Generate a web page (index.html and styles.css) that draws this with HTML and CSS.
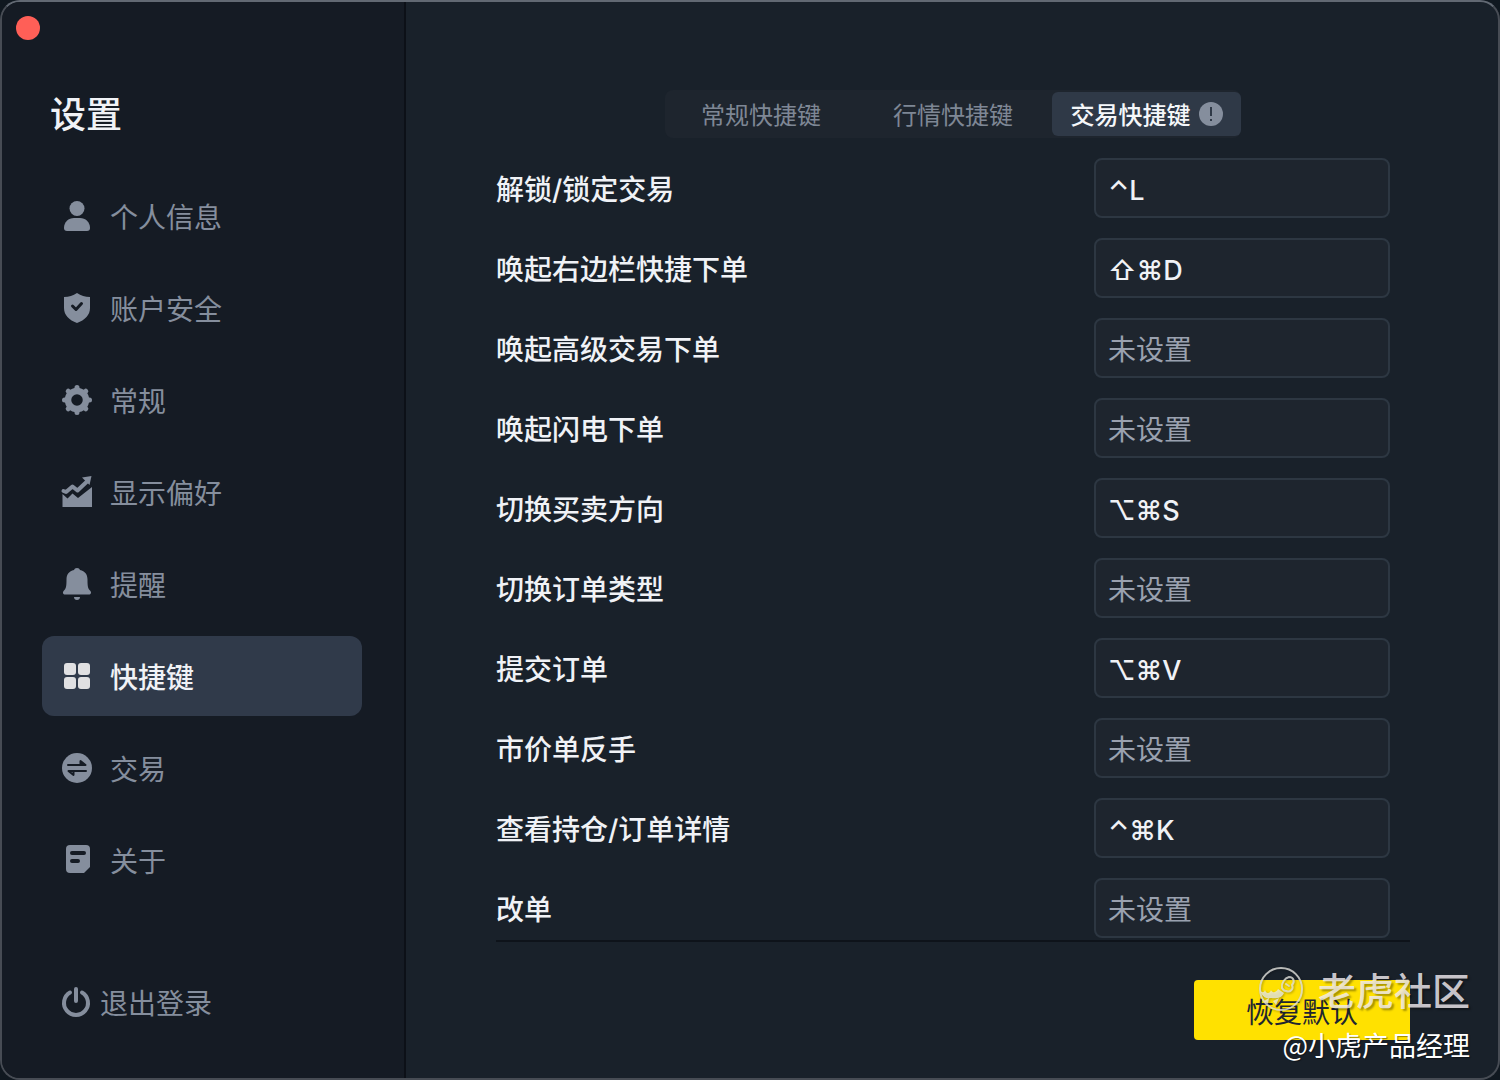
FILE: index.html
```html
<!DOCTYPE html>
<html lang="zh-CN">

<head>
	<meta charset="UTF-8">
	<meta name="viewport" content="width=device-width, initial-scale=1">
	<title>设置</title>
	<link rel="stylesheet" href="styles.css">
</head>

<body>
	<div class="window">
		<aside class="sidebar">
			<button type="button" class="close" aria-label="关闭"></button>
			<h1 class="title">设置</h1>
			<nav class="menu">
				<a href="#profile">
					<svg class="icon" viewBox="0 0 30 30"><circle cx="15" cy="7.5" r="7.5"/><path d="M2 27c0-6 4.500-10 10-10h6c5.500 0 10 4 10 10 0 2-1 3-3 3H5c-2 0-3-1-3-3z"/></svg>
					<span>个人信息</span>
				</a>
				<a href="#security">
					<svg class="icon" viewBox="0 0 30 30"><path d="M15 0c4 2.500 8 4 13 4v11c0 7-5 12-13 15C7 27 2 22 2 15V4c5 0 9-1.500 13-4z"/><path class="cut" d="M10.500 13l3.500 3.500 5.500-6"/></svg>
					<span>账户安全</span>
				</a>
				<a href="#general">
					<svg class="icon" viewBox="0 0 30 30"><circle cx="15" cy="15" r="9" fill="none" stroke="currentColor" stroke-width="6.500"/><path d="M15 2.500v3M15 24.500v3M2.500 15h3M24.500 15h3M6.200 6.200l2 2M21.800 21.800l2 2M6.200 23.800l2-2M21.800 8.200l2-2" fill="none" stroke="currentColor" stroke-width="5" stroke-linecap="round"/></svg>
					<span>常规</span>
				</a>
				<a href="#display">
					<svg class="icon" viewBox="0 0 30 30"><path d="M.500 17l5 4.500 5-5 5.500 4.500L30 10v20H.500z"/><path d="M1.500 14l2.500 1 6.500-5.500 5 4L25 4.500" fill="none" stroke="currentColor" stroke-width="4" stroke-linejoin="round" stroke-linecap="round"/><path d="M20 .500L29.500-1l-2 9z"/></svg>
					<span>显示偏好</span>
				</a>
				<a href="#notice">
					<svg class="icon" viewBox="0 0 30 30"><path d="M15-1c1.700 0 2.500.8 3 2 5 1 7.500 4.500 7.500 9.500 0 7 .5 9 2.500 11 2 2 .8 4-1 4H3c-1.800 0-3-2-1-4 2-2 2.500-4 2.500-11C4.500 5.500 7 2 12 1c.5-1.200 1.300-2 3-2zM12 28h6c0 2-1.200 3-3 3s-3-1-3-3z"/></svg>
					<span>提醒</span>
				</a>
				<a href="#shortcuts" class="active">
					<svg class="icon" viewBox="0 0 30 30"><rect x="2" y="2" width="12" height="12" rx="3"/><rect x="16" y="2" width="12" height="12" rx="3"/><rect x="2" y="16" width="12" height="12" rx="3"/><rect x="16" y="16" width="12" height="12" rx="3"/></svg>
					<span>快捷键</span>
				</a>
				<a href="#trade">
					<svg class="icon" viewBox="0 0 30 30"><circle cx="15" cy="15" r="15"/><path class="cut arrows" d="M6 12h17.500l-5-4v3M24 18H6.500l5 4v-3"/></svg>
					<span>交易</span>
				</a>
				<a href="#about">
					<svg class="icon" viewBox="0 0 30 30"><path d="M8 0h16q4 0 4 4v18l-6 6H8q-4 0-4-4V4q0-4 4-4z"/><path class="cut about" d="M10 8h12M10 16h6"/></svg>
					<span>关于</span>
				</a>
			</nav>
			<button type="button" class="logout">
				<svg class="icon" viewBox="0 0 30 30"><path d="M8 5.500a12 12 0 1 0 12 0M14 2v12" fill="none" stroke="currentColor" stroke-width="4" stroke-linecap="round"/></svg>
				<span>退出登录</span>
			</button>
		</aside>

		<main class="content">
			<div class="tabs">
				<button type="button"><span>常规快捷键</span></button>
				<button type="button"><span>行情快捷键</span></button>
				<button type="button" class="active">
					<span>交易快捷键</span>
					<svg class="tip" viewBox="0 0 24 24"><circle cx="12" cy="12" r="12"/><path d="M12 5v9M12 17v2"/></svg>
				</button>
			</div>

			<form class="keys" id="keys">
				<div class="row">
					<label for="unlock">解锁/锁定交易</label>
					<input type="text" id="unlock" value="⌃L" placeholder="未设置">
				</div>
				<div class="row">
					<label for="sideOrder">唤起右边栏快捷下单</label>
					<input type="text" id="sideOrder" value="⇧⌘D" placeholder="未设置">
				</div>
				<div class="row">
					<label for="proOrder">唤起高级交易下单</label>
					<input type="text" id="proOrder" placeholder="未设置">
				</div>
				<div class="row">
					<label for="flashOrder">唤起闪电下单</label>
					<input type="text" id="flashOrder" placeholder="未设置">
				</div>
				<div class="row">
					<label for="side">切换买卖方向</label>
					<input type="text" id="side" value="⌥⌘S" placeholder="未设置">
				</div>
				<div class="row">
					<label for="orderType">切换订单类型</label>
					<input type="text" id="orderType" placeholder="未设置">
				</div>
				<div class="row">
					<label for="submitOrder">提交订单</label>
					<input type="text" id="submitOrder" value="⌥⌘V" placeholder="未设置">
				</div>
				<div class="row">
					<label for="reverse">市价单反手</label>
					<input type="text" id="reverse" placeholder="未设置">
				</div>
				<div class="row">
					<label for="detail">查看持仓/订单详情</label>
					<input type="text" id="detail" value="⌃⌘K" placeholder="未设置">
				</div>
				<div class="row">
					<label for="modify">改单</label>
					<input type="text" id="modify" placeholder="未设置">
				</div>
			</form>

			<div class="footer">
				<button type="reset" form="keys" class="reset">恢复默认</button>
			</div>
		</main>

		<div class="watermark">
			<div class="brand">
				<svg class="logo" viewBox="0 0 46 46"><circle cx="23" cy="23" r="21"/><path class="paw" d="M2 24c2 3 4 3 5 0 1 4 5 4 6 0 1 3 5 3 7-1l6 4c-2 5-8 6-13 5-5 1-9-1-11-8zM6 35l5-3-1 6zM15 35l6-3-3 7z"/><path d="M24 22c-1-5 3-10 7-11 5 0 6 5 3 8 2 4-2 8-6 6-2 0-3-1-4-3zM28 18l3 2"/></svg>
				<span>老虎社区</span>
			</div>
			<div class="author">@小虎产品经理</div>
		</div>
	</div>
</body>

</html>
```
FILE: styles.css
```css
* {
	box-sizing: border-box;
}

body {
	margin: 0;
	background: #101820;
	color: #f0f2f6;
	font-family: Inter, "Noto Sans CJK SC", sans-serif;
	font-size: 28px;
	line-height: 40px;
}

button,
input {
	margin: 0;
	padding: 0;
	border: 0;
	background: none;
	color: inherit;
	font: inherit;
}

button {
	cursor: pointer;
}

.window {
	position: relative;
	display: flex;
	min-height: 100vh;
	border: 2px solid #474c54;
	border-top-color: #626973;
	border-radius: 20px;
	background: #19212a;
	overflow: hidden;
}

/* 左侧菜单 */
.sidebar {
	display: flex;
	flex-direction: column;
	flex: none;
	width: 404px;
	padding: 14px 42px 54px 40px;
	border-right: 2px solid #0c1017;
	background: #151b24;
}

.close {
	width: 24px;
	height: 24px;
	margin-left: -26px;
	border-radius: 50%;
	background: #ff5f57;
}

.title {
	margin: 48px 0 34px 8px;
	font-size: 36px;
	font-weight: 500;
	line-height: 54px;
}

.menu {
	display: flex;
	flex-direction: column;
	gap: 12px;
	margin-bottom: auto;
}

.menu a {
	display: flex;
	align-items: center;
	gap: 18px;
	height: 80px;
	padding: 0 20px;
	border-radius: 12px;
	color: #858e9d;
	text-decoration: none;
}

.menu span,
.logout span,
.tabs span,
.row label {
	padding-top: 4px;
}

.menu .active {
	background: #303a4a;
	color: #f0f2f6;
	font-weight: 500;
}

.menu .active .icon {
	color: #e0e0e2;
}

.icon {
	flex: none;
	width: 30px;
	height: 30px;
	fill: currentColor;
	overflow: visible;
}

.cut {
	fill: none;
	stroke: #151b24;
	stroke-width: 3;
	stroke-linecap: round;
	stroke-linejoin: round;
}

.arrows {
	stroke-width: 2;
}

.about {
	stroke-width: 4;
}

.logout {
	display: flex;
	align-items: center;
	gap: 8px;
	padding-left: 20px;
	color: #858e9d;
}

/* 右侧快捷键 */
.content {
	display: flex;
	flex-direction: column;
	flex: 1;
	padding: 88px 88px 38px 90px;
}

.tabs {
	display: grid;
	grid-template-columns: repeat(3, 1fr);
	align-self: center;
	width: 576px;
	padding: 2px 0;
	border-radius: 8px;
	background: #1e252e;
	font-size: 24px;
}

.tabs button {
	display: flex;
	align-items: center;
	justify-content: center;
	gap: 8px;
	height: 44px;
	border-radius: 6px;
	color: #7e8795;
}

.tabs .active {
	margin-left: 3px;
	background: #2f3947;
	color: #f5f7fa;
	font-weight: 500;
}

.tip {
	width: 24px;
	height: 24px;
	fill: #858e9d;
	stroke: #2f3947;
	stroke-width: 2;
}

.tip circle {
	stroke: none;
}

.keys {
	display: flex;
	flex-direction: column;
	flex: 1;
	gap: 20px;
	margin-top: 20px;
	padding: 0 20px 2px 0;
	border-bottom: 2px solid #0e131a;
}

.row {
	display: flex;
	align-items: center;
	justify-content: space-between;
}

.row label {
	font-weight: 500;
}

.row input {
	width: 296px;
	height: 60px;
	padding: 4px 12px 0;
	border: 2px solid #2d3742;
	border-radius: 8px;
	background: #1e252e;
	font-size: 27px;
	font-weight: 500;
	outline: none;
}

.row input:placeholder-shown {
	font-size: 28px;
	font-weight: 400;
}

.row input::placeholder {
	color: #9aa1af;
	opacity: 1;
}

.footer {
	display: flex;
	justify-content: flex-end;
	padding-top: 38px;
}

.reset {
	width: 216px;
	height: 60px;
	padding-top: 6px;
	border-radius: 4px;
	background: #ffe100;
	color: #1f2630;
}

/* 水印 */
.watermark {
	position: absolute;
	right: 28px;
	bottom: 14px;
	display: flex;
	flex-direction: column;
	align-items: flex-end;
	gap: 14px;
	font-family: "Noto Sans CJK SC", sans-serif;
	pointer-events: none;
}

.brand {
	display: flex;
	align-items: center;
	gap: 14px;
	color: rgba(240, 235, 240, .84);
	font-size: 38px;
	font-weight: 500;
	line-height: 46px;
	text-shadow: 2px 2px 2px rgba(0, 0, 0, .35);
}

.logo {
	width: 46px;
	height: 46px;
	fill: none;
	stroke: rgba(225, 225, 220, .8);
	stroke-width: 2;
	stroke-linecap: round;
	stroke-linejoin: round;
	filter: drop-shadow(1px 1px 1px rgba(0, 0, 0, .35));
}

.paw {
	fill: rgba(235, 235, 225, .8);
	stroke: none;
}

.author {
	color: #fff;
	font-size: 27px;
	line-height: 38px;
	text-shadow: 1px 1px 1px rgba(0, 0, 0, .4);
}
```
